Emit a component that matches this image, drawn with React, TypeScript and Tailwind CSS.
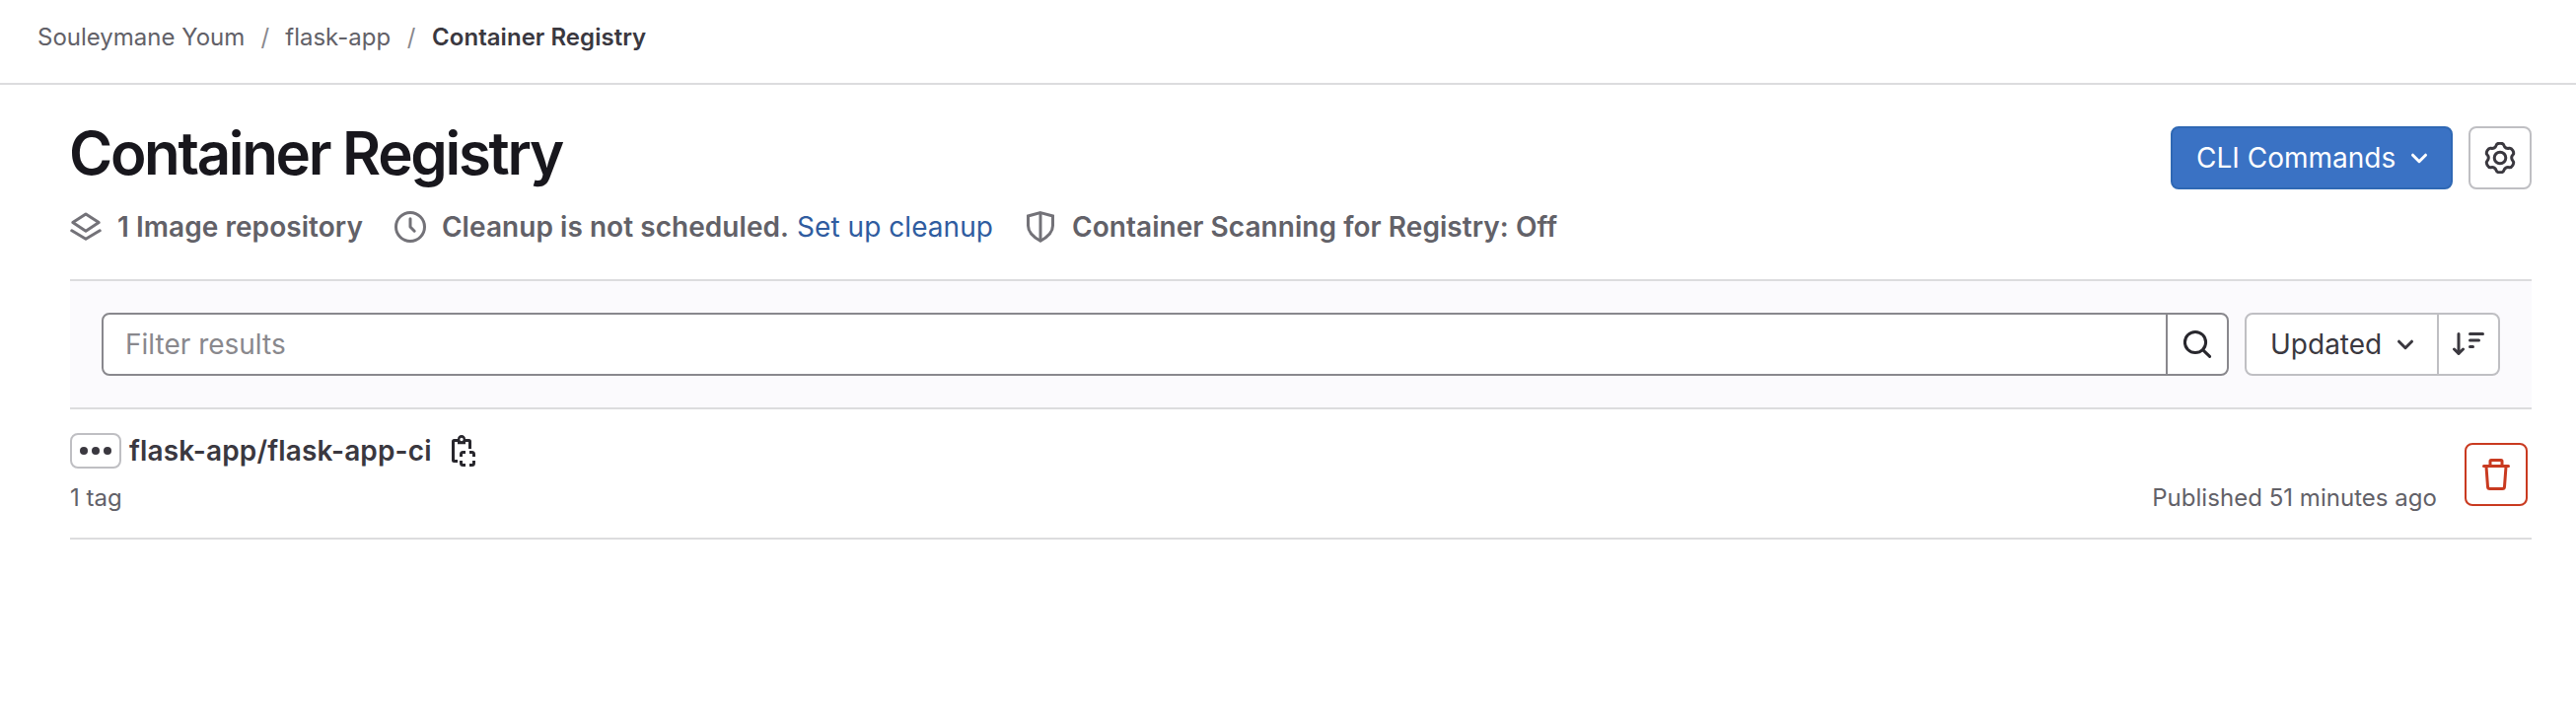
import React from "react";

type IconProps = { className?: string; children: React.ReactNode; w?: number };

function Icon({ className = "size-8", children, w = 1.5 }: IconProps) {
  return (
    <svg
      viewBox="0 0 16 16"
      className={`shrink-0 ${className}`}
      fill="none"
      stroke="currentColor"
      strokeWidth={w}
      aria-hidden="true"
    >
      {children}
    </svg>
  );
}

const LayersIcon = () => (
  <Icon>
    <path d="M8 1.5 14.6 5.8 8 10.1 1.4 5.8Z" strokeLinejoin="round" />
    <path d="M.9 9.9 8 14.1l7.1-4.2" strokeLinecap="round" strokeLinejoin="round" />
  </Icon>
);

const ClockIcon = () => (
  <Icon>
    <circle cx="8" cy="8" r="7.25" />
    <path d="M8 3.9V8l2.1 2.1" strokeLinecap="round" strokeLinejoin="round" />
  </Icon>
);

const ShieldIcon = () => (
  <Icon>
    <path d="M8 .8 14.25 2.5v4.9c0 3.4-2.5 5.7-6.25 7.7-3.75-2-6.25-4.3-6.25-7.7V2.5Z" />
    <path d="M8 1v14" />
  </Icon>
);

/* Six rounded teeth: each tooth contributes four control points of a smooth closed curve. */
function gearOutline(): string {
  const pts: [number, number][] = [];
  for (let k = 0; k < 6; k++) {
    const corners: [number, number][] = [[-22, 5.9], [-12, 7.6], [12, 7.6], [22, 5.9]];
    for (const [offset, r] of corners) {
      const a = ((k * 60 - 90 + offset) * Math.PI) / 180;
      pts.push([8 + r * Math.cos(a), 8 + r * Math.sin(a)]);
    }
  }
  const mid = (a: [number, number], b: [number, number]) =>
    `${((a[0] + b[0]) / 2).toFixed(2)} ${((a[1] + b[1]) / 2).toFixed(2)}`;
  let d = `M${mid(pts[pts.length - 1], pts[0])}`;
  pts.forEach((p, i) => {
    d += `Q${p[0].toFixed(2)} ${p[1].toFixed(2)} ${mid(p, pts[(i + 1) % pts.length])}`;
  });
  return d + "Z";
}

const GearIcon = () => (
  <Icon>
    <path d={gearOutline()} />
    <circle cx="8" cy="8" r="2.9" />
  </Icon>
);

const ChevronIcon = () => (
  <Icon>
    <path d="m4.75 6.6 3.25 3.25 3.25-3.25" strokeLinecap="round" strokeLinejoin="round" />
  </Icon>
);

const SearchIcon = () => (
  <Icon>
    <circle cx="7" cy="7" r="5.3" />
    <path d="m10.9 10.9 3.4 3.3" strokeLinecap="round" />
  </Icon>
);

const SortIcon = () => (
  <Icon>
    <path d="M3 2.75v10M.75 10.5 3 12.75l2.25-2.25" strokeLinecap="round" strokeLinejoin="round" />
    <path d="M8.75 2.75h6.5M8.75 6h4.5M8.75 9.25h1.5" strokeLinecap="round" />
  </Icon>
);

const CopyIcon = () => (
  <Icon>
    <path d="M5 2.75H3.25a.5.5 0 0 0-.5.5v9.5a.5.5 0 0 0 .5.5H5M9 2.75h1.75a.5.5 0 0 1 .5.5V7" />
    <path
      d="M7 0a2.2 2.2 0 0 0-2 2v2.6h4V2a2.2 2.2 0 0 0-2-2Zm0 1.4a.85.85 0 1 1 0 1.7.85.85 0 0 1 0-1.7Z"
      fill="currentColor"
      fillRule="evenodd"
      stroke="none"
    />
    <path d="M6.75 11V9.75a1 1 0 0 1 1-1H9M11 8.75h1.25a1 1 0 0 1 1 1V11M13.25 13v1.25a1 1 0 0 1-1 1H11M9 15.25H7.75a1 1 0 0 1-1-1V13" />
  </Icon>
);

const TrashIcon = () => (
  <Icon>
    <path d="M1.75 3.75h12.5" strokeLinecap="round" />
    <path d="M5 3.5V1.25a.5.5 0 0 1 .5-.5h5a.5.5 0 0 1 .5.5V3.5" />
    <path d="m3 4 .75 10.2a1.1 1.1 0 0 0 1.1 1.05h6.3a1.1 1.1 0 0 0 1.1-1.05L13 4" />
  </Icon>
);

function Breadcrumbs() {
  return (
    <nav className="flex h-[86px] items-center border-b-2 border-[#dcdcde] pb-2 pl-[38px] text-2xl text-[#626168]">
      <span>Souleymane Youm</span>
      <span className="w-[41px] text-center text-[#89888d]">/</span>
      <span>flask-app</span>
      <span className="w-[42px] text-center text-[#89888d]">/</span>
      <span className="font-semibold tracking-[0.03px] text-[#3a383f]">Container Registry</span>
    </nav>
  );
}

export default function App() {
  return (
    <div className="h-[736px] w-full bg-white font-['Inter',sans-serif] text-[28px] leading-8 text-[#3a383f]">
      <Breadcrumbs />
      <main className="pr-[45px] pl-[71px]">
        <header className="flex h-[197px] justify-between pt-[42px]">
          <div>
            <h1 className="-ml-px h-[55px] text-[60px] leading-[54px] font-semibold tracking-[-0.0385em] text-[#18171d]">
              Container Registry
            </h1>
            <div className="mt-[31px] flex items-center font-semibold tracking-[0.05px] text-[#626168]">
              <span className="mr-4 flex text-[#737278]"><LayersIcon /></span>
              <span className="mr-8">1 Image repository</span>
              <span className="mr-4 flex text-[#737278]"><ClockIcon /></span>
              <span className="mr-2">Cleanup is not scheduled.</span>
              <a className="mr-8 font-normal text-[#2f5ca0]">Set up cleanup</a>
              <span className="mr-4 flex text-[#737278]"><ShieldIcon /></span>
              <span>Container Scanning for Registry: Off</span>
            </div>
          </div>
          <div className="flex gap-4">
            <button className="flex h-16 w-[286px] items-center justify-between rounded-lg border-2 border-[#2f68b4] bg-[#3a72c4] pr-4 pl-6 text-white">
              CLI Commands
              <ChevronIcon />
            </button>
            <button className="flex size-16 items-center justify-center rounded-lg border-2 border-[#bfbfc3]">
              <GearIcon />
            </button>
          </div>
        </header>

        <section className="flex h-[132px] items-center gap-4 border-y-2 border-[#dcdcde] bg-[#fbfafd] px-8">
          <div className="flex h-16 flex-1 overflow-hidden rounded-lg border-2 border-[#89888d] bg-white">
            <div className="flex flex-1 items-center pl-[22px] text-[#89888d]">Filter results</div>
            <button className="flex w-[62px] items-center justify-center border-l-2 border-[#89888d] text-[#28272d]">
              <SearchIcon />
            </button>
          </div>
          <div className="flex h-16 w-[259px] rounded-lg border-2 border-[#bfbfc3] bg-white">
            <button className="flex flex-1 items-center justify-between pr-4 pl-6">
              Updated
              <ChevronIcon />
            </button>
            <button className="flex w-[62px] items-center justify-center border-l-2 border-[#bfbfc3]">
              <SortIcon />
            </button>
          </div>
        </section>

        <section className="flex h-[132px] items-center justify-between border-b-2 border-[#dcdcde] pr-1">
          <div>
            <div className="flex h-9 items-center">
              <button className="mr-2 flex h-9 w-[52px] items-center justify-center gap-1 rounded-lg border-2 border-[#bfbfc3]">
                <span className="size-2 rounded-full bg-[#3a383f]" />
                <span className="size-2 rounded-full bg-[#3a383f]" />
                <span className="size-2 rounded-full bg-[#3a383f]" />
              </button>
              <span className="font-semibold tracking-[0.14px]">flask-app/flask-app-ci</span>
              <span className="ml-4 flex text-[#28272d]"><CopyIcon /></span>
            </div>
            <div className="mt-[14px] text-2xl text-[#626168]">1 tag</div>
          </div>
          <div className="flex items-center pt-0.5">
            <span className="mt-12 mr-7 text-2xl tracking-[0.03px] text-[#626168]">Published 51 minutes ago</span>
            <button className="flex size-16 items-center justify-center rounded-lg border-2 border-[#c93a20] text-[#c93a20]">
              <TrashIcon />
            </button>
          </div>
        </section>
      </main>
    </div>
  );
}
